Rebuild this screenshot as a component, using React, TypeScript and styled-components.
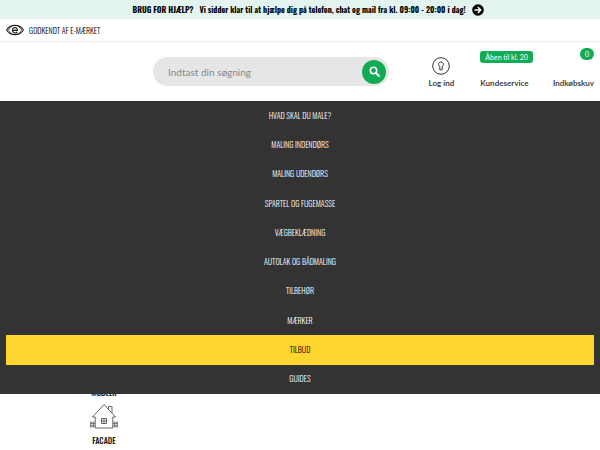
import React from "react";
import styled, { createGlobalStyle } from "styled-components";

const narrow = `Oswald, "Roboto Condensed", "Liberation Sans Narrow", "Open Sans Condensed", "Liberation Sans", sans-serif`;
const body = `Lato, "Liberation Sans", sans-serif`;

const GlobalStyle = createGlobalStyle`
  * { box-sizing: border-box; }
  body { margin: 0; background: #fff; color: #333; font-family: ${body}; overflow-x: hidden; }
  a { color: inherit; text-decoration: none; }
  ul { list-style: none; margin: 0; padding: 0; }
`;

const HelpBar = styled.a`
  display: flex;
  align-items: center;
  justify-content: center;
  gap: 6px;
  height: 19px;
  padding-left: 16px;
  background: #e3f3ef;
  font: 700 8px/19px ${narrow};
  white-space: nowrap;
  && { color: #000; }
`;

const TrustBar = styled.div`
  display: flex;
  align-items: center;
  gap: 5px;
  height: 23px;
  padding: 0 6px;
  border-bottom: 1px solid #ececec;
  font: 300 8px/22px ${narrow};
  color: #000;
`;

const Header = styled.header`
  display: grid;
  grid-template-columns: 147px minmax(0, 236px) 1fr;
  align-items: center;
  height: 59px;
  padding: 0 6px;
`;

const Search = styled.form`
  grid-column: 2;
  display: flex;
  align-items: center;
  height: 29px;
  padding: 0 3px 0 15px;
  border-radius: 15px;
  background: #e6e6e6;
`;

const SearchInput = styled.input`
  flex: 1;
  min-width: 0;
  padding: 0;
  border: 0;
  outline: 0;
  background: none;
  font: 400 10px/16px ${body};
  color: #333;
  &::placeholder { color: #888; opacity: 1; }
`;

const SearchButton = styled.button`
  display: grid;
  place-items: center;
  width: 24px;
  height: 24px;
  padding: 0;
  border: 0;
  border-radius: 50%;
  background: #12ab55;
`;

const Tools = styled.nav`
  display: flex;
  justify-content: flex-end;
  align-items: flex-end;
  align-self: start;
  gap: 20px;
  margin-top: 6px;
`;

const Tool = styled.a<{ $height: number; $align?: string }>`
  display: flex;
  flex-direction: column;
  align-items: ${(p) => p.$align ?? "center"};
  justify-content: space-between;
  height: ${(p) => p.$height}px;
  font: 700 8px/12px ${body};
  color: #444;
  white-space: nowrap;
`;

const LoginTool = styled(Tool)`
  margin-right: 6px;
`;

const Badge = styled.span`
  padding: 0 5px;
  border-radius: 3px;
  background: #12ab55;
  color: #fff;
  font: 400 7px/12px ${body};
`;

const CountBadge = styled(Badge)`
  border-radius: 6px;
`;

const Main = styled.main`
  position: relative;
`;

const Menu = styled.ul`
  && {
    position: absolute;
    inset: 0 0 auto;
    display: grid;
    grid-auto-rows: 1fr;
    min-height: 293px;
    padding: 0 6px;
    background: #333;
  }
`;

const MenuLink = styled.a<{ $highlight?: boolean }>`
  display: flex;
  align-items: center;
  justify-content: center;
  height: 100%;
  padding-bottom: 2px;
  font: 300 8px/12px ${narrow};
  && { color: ${(p) => (p.$highlight ? "#000" : "#fff")}; }
  background: ${(p) => (p.$highlight ? "#ffd630" : "transparent")};
`;

const Categories = styled.section`
  display: grid;
  grid-template-columns: repeat(3, 1fr);
  padding: 285px 6px 0;
`;

const Category = styled.a`
  grid-column: 1;
  display: flex;
  flex-direction: column;
  align-items: center;
  gap: 5px;
  padding-bottom: 5px;
  font: 500 8px/12px ${narrow};
  && { color: #222; }
`;

const EyeIcon = () => (
  <svg width="18" height="12" viewBox="0 0 18 12" fill="none" stroke="#222" aria-hidden="true">
    <path d="M.6 6C4-.2 14-.2 17.400 6 14 12.200 4 12.200.6 6z" strokeWidth="1.100" />
    <path d="M6 2.200Q3.500 3.600 2.400 6 3.500 8.400 6 9.800M12 2.200Q14.500 3.600 15.600 6 14.500 8.400 12 9.800" strokeWidth=".7" />
    <path d="M6.700 6.300h4.700c.2-3.500-4.800-3.700-4.900-.3-.1 3.200 3.200 3.700 4.700 2" strokeWidth="1.200" />
  </svg>
);

const ArrowIcon = () => (
  <svg width="12" height="12" viewBox="0 0 12 12" aria-hidden="true">
    <circle cx="6" cy="6" r="5.800" fill="#000" />
    <path d="M2.500 6h6M5.800 3l3 3-3 3" fill="none" stroke="#fff" strokeWidth="1.500" />
  </svg>
);

const SearchIcon = () => (
  <svg width="11" height="11" viewBox="0 0 11 11" fill="none" stroke="#fff" aria-hidden="true">
    <circle cx="4.500" cy="4.500" r="3.200" strokeWidth="1.500" />
    <path d="M7 7l3 3" strokeWidth="1.900" strokeLinecap="round" />
  </svg>
);

const KeyholeIcon = () => (
  <svg width="18" height="18" viewBox="0 0 18 18" fill="none" stroke="#333" aria-hidden="true">
    <circle cx="9" cy="9" r="8.300" strokeWidth="1" />
    <path d="M7.800 12.800V9.400C5.600 8 6.500 5 9 5s3.400 3 1.200 4.400v3.400z" strokeWidth="1" />
  </svg>
);

const HouseIcon = () => (
  <svg width="28" height="26" viewBox="0 0 28 26" fill="none" stroke="#555" strokeWidth=".9" aria-hidden="true">
    <path d="M2.500 14 14 1.500 25.500 14h-2.700v11H5.200V14zM18.500 6V3.500h3.500v6.300" />
    <path d="M11.500 15.500h5v5h-5zM14 15.500v5M11.500 18h5" />
    <path d="M.8 24.500v-6M3.200 24.500v-6M0 20.200h5M0 23h5M24.800 24.500v-6M27.200 24.500v-6M23 20.200h5M23 23h5" />
  </svg>
);

const items = [
  "HVAD SKAL DU MALE?",
  "MALING INDENDØRS",
  "MALING UDENDØRS",
  "SPARTEL OG FUGEMASSE",
  "VÆGBEKLÆDNING",
  "AUTOLAK OG BÅDMALING",
  "TILBEHØR",
  "MÆRKER",
  "TILBUD",
  "GUIDES",
];

export default function App() {
  return (
    <>
      <GlobalStyle />
      <HelpBar href="#help">
        <span>BRUG FOR HJÆLP?</span>
        <span>Vi sidder klar til at hjælpe dig på telefon, chat og mail fra kl. 09:00 - 20:00 i dag!</span>
        <ArrowIcon />
      </HelpBar>
      <TrustBar>
        <EyeIcon />
        GODKENDT AF E-MÆRKET
      </TrustBar>
      <Header>
        <Search role="search" onSubmit={(e) => e.preventDefault()}>
          <SearchInput type="text" aria-label="Søg" placeholder="Indtast din søgning" />
          <SearchButton type="submit" aria-label="Søg">
            <SearchIcon />
          </SearchButton>
        </Search>
        <Tools>
          <LoginTool href="#login" $height={32}>
            <KeyholeIcon />
            Log ind
          </LoginTool>
          <Tool href="#service" $height={38} $align="flex-start">
            <Badge>Åben til kl. 20</Badge>
            Kundeservice
          </Tool>
          <Tool href="#cart" $height={41} $align="flex-end">
            <CountBadge>0</CountBadge>
            Indkøbskuv
          </Tool>
        </Tools>
      </Header>
      <Main>
        <Categories>
          <Category href="#mobler">MØBLER</Category>
          <Category href="#facade">
            <HouseIcon />
            FACADE
          </Category>
        </Categories>
        <Menu>
          {items.map((name) => (
            <li key={name}>
              <MenuLink href="#menu" $highlight={name === "TILBUD"}>
                {name}
              </MenuLink>
            </li>
          ))}
        </Menu>
      </Main>
    </>
  );
}
